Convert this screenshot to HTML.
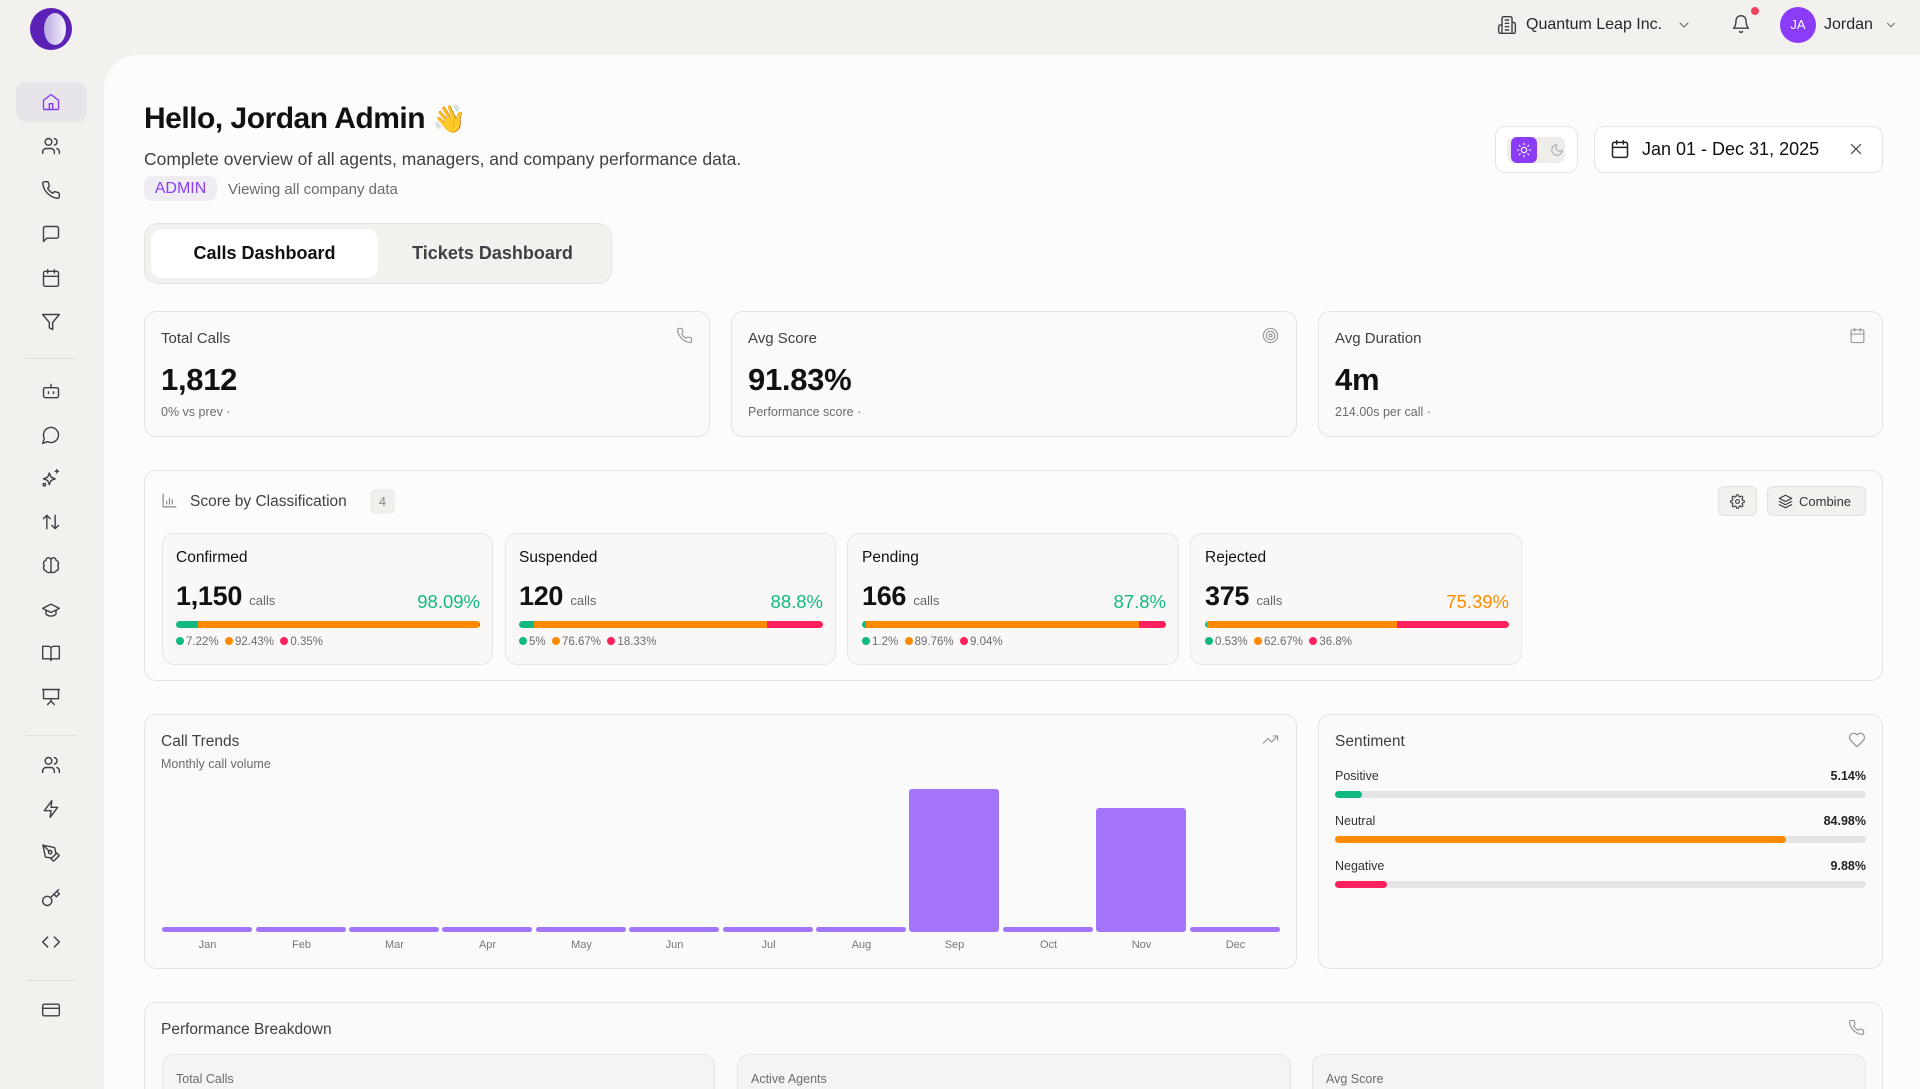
<!DOCTYPE html>
<html><head><meta charset="utf-8"><style>
*{box-sizing:border-box;margin:0;padding:0}
html,body{width:1920px;height:1089px;overflow:hidden}
body{background:#f3f1ed;font-family:"Liberation Sans",sans-serif;color:#111}
#w{position:relative;width:1920px;height:1089px;overflow:hidden}
.a{position:absolute}
svg.i{fill:none;stroke:#3f3f46;stroke-width:1.7;stroke-linecap:round;stroke-linejoin:round}
.main{position:absolute;left:104px;top:55px;width:1816px;height:1034px;background:#fcfcfb;border-top-left-radius:34px}
.card{position:absolute;background:#fafafa;border:1.5px solid #e4e4e4;border-radius:12px}
.sub{position:absolute;background:#f9f8f7;border:1.5px solid #e8e6e4;border-radius:12px}
.muted{color:#6b6b6b}
.dot{display:inline-block;width:8px;height:8px;border-radius:50%;margin-right:2px;vertical-align:0}
.bar{position:absolute;height:7px;border-radius:4px;overflow:hidden;display:flex}
.mb{position:absolute;background:#a475fb;border-radius:3px}
.ml{position:absolute;font-size:11px;color:#777;text-align:center;width:91px}
.sep{position:absolute;left:26px;width:50px;border-top:1px solid #e2dfda}
</style></head><body><div id="w">
<div class="a" style="left:30px;top:8px;width:42px;height:42px;border-radius:50%;background:#5b21b6"></div>
<div class="a" style="left:44px;top:13px;width:22px;height:32px;border-radius:50%;background:linear-gradient(90deg,#b9a8e0,#f4f1fb)"></div>
<div class="a" style="left:16px;top:82px;width:71px;height:40px;border-radius:10px;background:#e7e5ea"></div>
<svg class="i a" style="left:41px;top:92px;stroke:#8b3cf6" width="20" height="20" viewBox="0 0 24 24"><path d="M3 10l9-7 9 7v10a1 1 0 0 1-1 1H4a1 1 0 0 1-1-1z"/><path d="M10 21v-7h4v7"/></svg>
<svg class="i a" style="left:41px;top:136px" width="20" height="20" viewBox="0 0 24 24"><circle cx="9" cy="7" r="4"/><path d="M2 21v-2a4 4 0 0 1 4-4h6a4 4 0 0 1 4 4v2M16 3.1a4 4 0 0 1 0 7.8M22 21v-2a4 4 0 0 0-3-3.9"/></svg>
<svg class="i a" style="left:41px;top:180px" width="20" height="20" viewBox="0 0 24 24"><path d="M22 16.9v3a2 2 0 0 1-2.2 2 19.8 19.8 0 0 1-8.6-3.1 19.5 19.5 0 0 1-6-6A19.8 19.8 0 0 1 2.1 4.2 2 2 0 0 1 4.1 2h3a2 2 0 0 1 2 1.7c.1 1 .4 1.9.7 2.8a2 2 0 0 1-.5 2.1L8 9.9a16 16 0 0 0 6 6l1.3-1.3a2 2 0 0 1 2.1-.4c.9.3 1.8.6 2.8.7a2 2 0 0 1 1.7 2z"/></svg>
<svg class="i a" style="left:41px;top:224px" width="20" height="20" viewBox="0 0 24 24"><path d="M21 15a2 2 0 0 1-2 2H7l-4 4V5a2 2 0 0 1 2-2h14a2 2 0 0 1 2 2z"/></svg>
<svg class="i a" style="left:41px;top:268px" width="20" height="20" viewBox="0 0 24 24"><rect x="3" y="4" width="18" height="18" rx="2"/><path d="M16 2v4M8 2v4M3 10h18"/></svg>
<svg class="i a" style="left:41px;top:312px" width="20" height="20" viewBox="0 0 24 24"><path d="M22 3H2l8 9.5V19l4 2v-8.5z"/></svg>
<div class="sep" style="top:358px"></div>
<svg class="i a" style="left:41px;top:381px" width="20" height="20" viewBox="0 0 24 24"><rect x="3" y="8" width="18" height="12" rx="2"/><path d="M12 8V4M9 13v2M15 13v2"/></svg>
<svg class="i a" style="left:41px;top:425px" width="20" height="20" viewBox="0 0 24 24"><path d="M7.9 20A9 9 0 1 0 4 16.1L2 22z"/></svg>
<svg class="i a" style="left:41px;top:468px" width="20" height="20" viewBox="0 0 24 24"><path d="M10 6l2 5 5 2-5 2-2 5-2-5-5-2 5-2zM19 2v4M17 4h4"/><circle cx="4" cy="20" r="1.5"/></svg>
<svg class="i a" style="left:41px;top:512px" width="20" height="20" viewBox="0 0 24 24"><path d="M7 20V4M3 8l4-4 4 4M17 4v16M13 16l4 4 4-4"/></svg>
<svg class="i a" style="left:41px;top:556px" width="20" height="20" viewBox="0 0 24 24"><path d="M12 5a3 3 0 1 0-6 .1 4 4 0 0 0-2 6.4A4 4 0 0 0 6 18a4 4 0 0 0 6 1zM12 5a3 3 0 1 1 6 .1 4 4 0 0 1 2 6.4A4 4 0 0 1 18 18a4 4 0 0 1-6 1zM12 5v14"/></svg>
<svg class="i a" style="left:41px;top:600px" width="20" height="20" viewBox="0 0 24 24"><path d="M22 10L12 5 2 10l10 5zM6 12v5c3 3 9 3 12 0v-5"/></svg>
<svg class="i a" style="left:41px;top:643px" width="20" height="20" viewBox="0 0 24 24"><path d="M2 4h7a3 3 0 0 1 3 3v14a2 2 0 0 0-2-2H2zM22 4h-7a3 3 0 0 0-3 3v14a2 2 0 0 1 2-2h8z"/></svg>
<svg class="i a" style="left:41px;top:687px" width="20" height="20" viewBox="0 0 24 24"><path d="M2 3h20M3 3v11h18V3M12 14v3M8 21l4-4 4 4"/></svg>
<div class="sep" style="top:735px"></div>
<svg class="i a" style="left:41px;top:755px" width="20" height="20" viewBox="0 0 24 24"><circle cx="9" cy="7" r="4"/><path d="M2 21v-2a4 4 0 0 1 4-4h6a4 4 0 0 1 4 4v2M16 3.1a4 4 0 0 1 0 7.8M22 21v-2a4 4 0 0 0-3-3.9"/></svg>
<svg class="i a" style="left:41px;top:799px" width="20" height="20" viewBox="0 0 24 24"><path d="M13 2L4 14h8l-1 8 9-12h-8z"/></svg>
<svg class="i a" style="left:41px;top:843px" width="20" height="20" viewBox="0 0 24 24"><path d="M15.7 21.3a1 1 0 0 1-1.4 0l-1.6-1.6a1 1 0 0 1 0-1.4l5.6-5.6a1 1 0 0 1 1.4 0l1.6 1.6a1 1 0 0 1 0 1.4zM18 13l-1.4-6.9a1 1 0 0 0-.8-.8L2.3 2.6 5.1 16.2a1 1 0 0 0 .8.8L13 18M2.3 2.3l7.3 7.3"/><circle cx="11" cy="11" r="2"/></svg>
<svg class="i a" style="left:41px;top:888px" width="20" height="20" viewBox="0 0 24 24"><circle cx="7.5" cy="15.5" r="5.5"/><path d="M21 2l-9.6 9.6M15.5 7.5l3 3L22 7l-3-3"/></svg>
<svg class="i a" style="left:41px;top:932px" width="20" height="20" viewBox="0 0 24 24"><path d="M16 18l6-6-6-6M8 6l-6 6 6 6"/></svg>
<div class="sep" style="top:980px"></div>
<svg class="i a" style="left:41px;top:1000px" width="20" height="20" viewBox="0 0 24 24"><rect x="2" y="5" width="20" height="14" rx="2"/><path d="M2 10h20"/></svg>

<svg class="i a" style="left:1497px;top:15px" width="20" height="20" viewBox="0 0 24 24"><path d="M6 22V4a2 2 0 0 1 2-2h8a2 2 0 0 1 2 2v18zM6 12H4a2 2 0 0 0-2 2v6a2 2 0 0 0 2 2h2M18 9h2a2 2 0 0 1 2 2v9a2 2 0 0 1-2 2h-2M10 6h4M10 10h4M10 14h4M10 18h4"/></svg>
<div class="a" style="left:1526px;top:16px;font-size:16px;color:#27272a">Quantum Leap Inc.</div>
<svg class="i a" style="left:1676px;top:17px;stroke:#666" width="16" height="16" viewBox="0 0 24 24"><path d="M6 9l6 6 6-6"/></svg>
<svg class="i a" style="left:1731px;top:14px" width="20" height="20" viewBox="0 0 24 24"><path d="M6 8a6 6 0 0 1 12 0c0 7 3 9 3 9H3s3-2 3-9M10.3 21a1.9 1.9 0 0 0 3.4 0"/></svg>
<div class="a" style="left:1751px;top:7px;width:8px;height:8px;border-radius:50%;background:#f43f5e"></div>
<div class="a" style="left:1780px;top:7px;width:36px;height:36px;border-radius:50%;background:#8b3cf6;color:#fff;font-size:13px;line-height:36px;text-align:center">JA</div>
<div class="a" style="left:1824px;top:16px;font-size:16px;color:#27272a">Jordan</div>
<svg class="i a" style="left:1884px;top:18px;stroke:#666" width="14" height="14" viewBox="0 0 24 24"><path d="M6 9l6 6 6-6"/></svg>

<div class="main"></div>
<div class="a" style="left:144px;top:102px;font-size:30px;font-weight:bold;letter-spacing:-.5px">Hello, Jordan Admin <span style="font-size:27px">👋</span></div>
<div class="a" style="left:144px;top:149px;font-size:17.5px;color:#3f3f46">Complete overview of all agents, managers, and company performance data.</div>
<div class="a" style="left:144px;top:176px;width:73px;height:25px;border-radius:8px;background:#efedf3;color:#8b3cf6;font-size:16px;line-height:25px;text-align:center">ADMIN</div>
<div class="a" style="left:228px;top:181px;font-size:15px;color:#6b6b6b">Viewing all company data</div>
<div class="a" style="left:144px;top:223px;width:468px;height:61px;border-radius:14px;background:#f3f1ee;border:1.5px solid #e5e3df"></div>
<div class="a" style="left:151px;top:229px;width:227px;height:49px;border-radius:11px;background:#fff;font-size:18px;line-height:49px;text-align:center;font-weight:bold;color:#111">Calls Dashboard</div>
<div class="a" style="left:390px;top:229px;width:205px;height:49px;font-size:18px;line-height:49px;text-align:center;font-weight:bold;color:#3f3f46">Tickets Dashboard</div>

<div class="a" style="left:1495px;top:126px;width:83px;height:47px;border-radius:10px;background:#fff;border:1.5px solid #e3e3e3"></div>
<div class="a" style="left:1507px;top:137px;width:58px;height:26px;border-radius:7px;background:#efedea"></div>
<div class="a" style="left:1511px;top:137px;width:26px;height:26px;border-radius:6px;background:#8b3cf6"></div>
<svg class="i a" style="left:1516px;top:142px;stroke:#fff;stroke-width:1.6" width="16" height="16" viewBox="0 0 24 24"><circle cx="12" cy="12" r="4"/><path d="M12 2v2M12 20v2M4.9 4.9l1.4 1.4M17.7 17.7l1.4 1.4M2 12h2M20 12h2M6.3 17.7l-1.4 1.4M19.1 4.9l-1.4 1.4"/></svg>
<svg class="i a" style="left:1550px;top:143px;stroke:#aaa" width="14" height="14" viewBox="0 0 24 24"><path d="M12 3a6 6 0 0 0 9 9 9 9 0 1 1-9-9z"/></svg>
<div class="a" style="left:1594px;top:126px;width:289px;height:47px;border-radius:10px;background:#fff;border:1.5px solid #e3e3e3"></div>
<svg class="i a" style="left:1610px;top:139px;stroke:#222;stroke-width:1.8" width="20" height="20" viewBox="0 0 24 24"><rect x="3" y="4" width="18" height="18" rx="2"/><path d="M16 2v4M8 2v4M3 10h18"/></svg>
<div class="a" style="left:1642px;top:139px;font-size:18px;color:#111">Jan 01 - Dec 31, 2025</div>
<svg class="i a" style="left:1847px;top:140px;stroke:#555" width="18" height="18" viewBox="0 0 24 24"><path d="M18 6L6 18M6 6l12 12"/></svg>

<div class="card" style="left:144px;top:311px;width:566px;height:126px"></div>
<div class="card" style="left:731px;top:311px;width:566px;height:126px"></div>
<div class="card" style="left:1318px;top:311px;width:565px;height:126px"></div>
<div class="a" style="left:161px;top:330px;font-size:15px;color:#3f3f46">Total Calls</div>
<div class="a" style="left:161px;top:362px;font-size:31px;font-weight:bold;letter-spacing:-.3px">1,812</div>
<div class="a muted" style="left:161px;top:405px;font-size:12.5px">0% vs prev ·</div>
<svg class="i a" style="left:676px;top:327px;stroke:#999" width="17" height="17" viewBox="0 0 24 24"><path d="M22 16.9v3a2 2 0 0 1-2.2 2 19.8 19.8 0 0 1-8.6-3.1 19.5 19.5 0 0 1-6-6A19.8 19.8 0 0 1 2.1 4.2 2 2 0 0 1 4.1 2h3a2 2 0 0 1 2 1.7c.1 1 .4 1.9.7 2.8a2 2 0 0 1-.5 2.1L8 9.9a16 16 0 0 0 6 6l1.3-1.3a2 2 0 0 1 2.1-.4c.9.3 1.8.6 2.8.7a2 2 0 0 1 1.7 2z"/></svg>
<div class="a" style="left:748px;top:330px;font-size:15px;color:#3f3f46">Avg Score</div>
<div class="a" style="left:748px;top:362px;font-size:31px;font-weight:bold;letter-spacing:-.3px">91.83%</div>
<div class="a muted" style="left:748px;top:405px;font-size:12.5px">Performance score ·</div>
<svg class="i a" style="left:1262px;top:327px;stroke:#999" width="17" height="17" viewBox="0 0 24 24"><circle cx="12" cy="12" r="10"/><circle cx="12" cy="12" r="6"/><circle cx="12" cy="12" r="2"/></svg>
<div class="a" style="left:1335px;top:330px;font-size:15px;color:#3f3f46">Avg Duration</div>
<div class="a" style="left:1335px;top:362px;font-size:31px;font-weight:bold;letter-spacing:-.3px">4m</div>
<div class="a muted" style="left:1335px;top:405px;font-size:12.5px">214.00s per call ·</div>
<svg class="i a" style="left:1849px;top:327px;stroke:#999" width="17" height="17" viewBox="0 0 24 24"><rect x="3" y="4" width="18" height="18" rx="2"/><path d="M16 2v4M8 2v4M3 10h18"/></svg>

<div class="card" style="left:144px;top:470px;width:1739px;height:211px;background:#fcfcfb"></div>
<svg class="i a" style="left:161px;top:492px;stroke:#888" width="17" height="17" viewBox="0 0 24 24"><path d="M3 3v18h18M8 17v-4M12 17V9M16 17v-6"/></svg>
<div class="a" style="left:190px;top:493px;font-size:15.5px;color:#3f3f46">Score by Classification</div>
<div class="a" style="left:370px;top:489px;width:25px;height:25px;border-radius:5px;background:#f1efec;color:#888;font-size:13px;line-height:25px;text-align:center">4</div>
<div class="a" style="left:1718px;top:486px;width:39px;height:30px;border-radius:6px;background:#f3f1ee;border:1.5px solid #e3e1dd"></div>
<svg class="i a" style="left:1730px;top:494px;stroke:#333" width="15" height="15" viewBox="0 0 24 24"><circle cx="12" cy="12" r="3"/><path d="M19.4 15a1.7 1.7 0 0 0 .3 1.8l.1.1a2 2 0 1 1-2.8 2.8l-.1-.1a1.7 1.7 0 0 0-1.8-.3 1.7 1.7 0 0 0-1 1.5V21a2 2 0 1 1-4 0v-.1a1.7 1.7 0 0 0-1.1-1.5 1.7 1.7 0 0 0-1.8.3l-.1.1a2 2 0 1 1-2.8-2.8l.1-.1a1.7 1.7 0 0 0 .3-1.8 1.7 1.7 0 0 0-1.5-1H3a2 2 0 1 1 0-4h.1a1.7 1.7 0 0 0 1.5-1.1 1.7 1.7 0 0 0-.3-1.8l-.1-.1a2 2 0 1 1 2.8-2.8l.1.1a1.7 1.7 0 0 0 1.8.3H9a1.7 1.7 0 0 0 1-1.5V3a2 2 0 1 1 4 0v.1a1.7 1.7 0 0 0 1 1.5 1.7 1.7 0 0 0 1.8-.3l.1-.1a2 2 0 1 1 2.8 2.8l-.1.1a1.7 1.7 0 0 0-.3 1.8V9a1.7 1.7 0 0 0 1.5 1H21a2 2 0 1 1 0 4h-.1a1.7 1.7 0 0 0-1.5 1z"/></svg>
<div class="a" style="left:1767px;top:486px;width:99px;height:30px;border-radius:6px;background:#f3f1ee;border:1.5px solid #e3e1dd"></div>
<svg class="i a" style="left:1778px;top:494px;stroke:#333" width="15" height="15" viewBox="0 0 24 24"><path d="M12 2L2 7l10 5 10-5zM2 12l10 5 10-5M2 17l10 5 10-5"/></svg>
<div class="a" style="left:1799px;top:494px;font-size:13px;color:#333">Combine</div>

<div class="sub" style="left:162px;top:533px;width:331px;height:132px"></div>
<div class="sub" style="left:505px;top:533px;width:331px;height:132px"></div>
<div class="sub" style="left:847px;top:533px;width:332px;height:132px"></div>
<div class="sub" style="left:1190px;top:533px;width:332px;height:132px"></div>

<div class="a" style="left:176px;top:549px;font-size:15.5px">Confirmed</div>
<div class="a" style="left:176px;top:581px;font-size:27px;font-weight:bold;letter-spacing:-.3px">1,150 <span style="font-size:13px;font-weight:normal;color:#666;letter-spacing:0">calls</span></div>
<div class="a" style="left:380px;top:591px;width:100px;text-align:right;font-size:18.5px;color:#10b981">98.09%</div>
<div class="bar" style="left:176px;top:621px;width:304px"><div style="width:7.22%;background:#10b981"></div><div style="width:92.43%;background:#ff8a00"></div><div style="flex:1;background:#ff2060"></div></div>
<div class="a muted" style="left:176px;top:636px;font-size:11.5px"><span class="dot" style="background:#10b981"></span>7.22% &nbsp;<span class="dot" style="background:#ff8a00"></span>92.43% &nbsp;<span class="dot" style="background:#ff2060"></span>0.35%</div>

<div class="a" style="left:519px;top:549px;font-size:15.5px">Suspended</div>
<div class="a" style="left:519px;top:581px;font-size:27px;font-weight:bold;letter-spacing:-.3px">120 <span style="font-size:13px;font-weight:normal;color:#666;letter-spacing:0">calls</span></div>
<div class="a" style="left:723px;top:591px;width:100px;text-align:right;font-size:18.5px;color:#10b981">88.8%</div>
<div class="bar" style="left:519px;top:621px;width:304px"><div style="width:5%;background:#10b981"></div><div style="width:76.67%;background:#ff8a00"></div><div style="flex:1;background:#ff2060"></div></div>
<div class="a muted" style="left:519px;top:636px;font-size:11.5px"><span class="dot" style="background:#10b981"></span>5% &nbsp;<span class="dot" style="background:#ff8a00"></span>76.67% &nbsp;<span class="dot" style="background:#ff2060"></span>18.33%</div>

<div class="a" style="left:862px;top:549px;font-size:15.5px">Pending</div>
<div class="a" style="left:862px;top:581px;font-size:27px;font-weight:bold;letter-spacing:-.3px">166 <span style="font-size:13px;font-weight:normal;color:#666;letter-spacing:0">calls</span></div>
<div class="a" style="left:1066px;top:591px;width:100px;text-align:right;font-size:18.5px;color:#10b981">87.8%</div>
<div class="bar" style="left:862px;top:621px;width:304px"><div style="width:1.2%;background:#10b981"></div><div style="width:89.76%;background:#ff8a00"></div><div style="flex:1;background:#ff2060"></div></div>
<div class="a muted" style="left:862px;top:636px;font-size:11.5px"><span class="dot" style="background:#10b981"></span>1.2% &nbsp;<span class="dot" style="background:#ff8a00"></span>89.76% &nbsp;<span class="dot" style="background:#ff2060"></span>9.04%</div>

<div class="a" style="left:1205px;top:549px;font-size:15.5px">Rejected</div>
<div class="a" style="left:1205px;top:581px;font-size:27px;font-weight:bold;letter-spacing:-.3px">375 <span style="font-size:13px;font-weight:normal;color:#666;letter-spacing:0">calls</span></div>
<div class="a" style="left:1409px;top:591px;width:100px;text-align:right;font-size:18.5px;color:#ff8a00">75.39%</div>
<div class="bar" style="left:1205px;top:621px;width:304px"><div style="width:0.53%;background:#10b981"></div><div style="width:62.67%;background:#ff8a00"></div><div style="flex:1;background:#ff2060"></div></div>
<div class="a muted" style="left:1205px;top:636px;font-size:11.5px"><span class="dot" style="background:#10b981"></span>0.53% &nbsp;<span class="dot" style="background:#ff8a00"></span>62.67% &nbsp;<span class="dot" style="background:#ff2060"></span>36.8%</div>

<div class="card" style="left:144px;top:714px;width:1153px;height:255px"></div>
<div class="a" style="left:161px;top:733px;font-size:15.5px;color:#3f3f46">Call Trends</div>
<div class="a muted" style="left:161px;top:757px;font-size:12.5px">Monthly call volume</div>
<svg class="i a" style="left:1262px;top:731px;stroke:#999" width="17" height="17" viewBox="0 0 24 24"><path d="M22 7l-8.5 8.5-5-5L2 17M16 7h6v6"/></svg>
<div class="mb" style="left:162px;top:927px;width:90px;height:5px"></div>
<div class="mb" style="left:256px;top:927px;width:90px;height:5px"></div>
<div class="mb" style="left:349px;top:927px;width:90px;height:5px"></div>
<div class="mb" style="left:442px;top:927px;width:90px;height:5px"></div>
<div class="mb" style="left:536px;top:927px;width:90px;height:5px"></div>
<div class="mb" style="left:629px;top:927px;width:90px;height:5px"></div>
<div class="mb" style="left:723px;top:927px;width:90px;height:5px"></div>
<div class="mb" style="left:816px;top:927px;width:90px;height:5px"></div>
<div class="mb" style="left:909px;top:789px;width:90px;height:143px"></div>
<div class="mb" style="left:1003px;top:927px;width:90px;height:5px"></div>
<div class="mb" style="left:1096px;top:808px;width:90px;height:124px"></div>
<div class="mb" style="left:1190px;top:927px;width:90px;height:5px"></div>
<div class="ml" style="left:162px;top:939px">Jan</div><div class="ml" style="left:256px;top:939px">Feb</div><div class="ml" style="left:349px;top:939px">Mar</div><div class="ml" style="left:442px;top:939px">Apr</div><div class="ml" style="left:536px;top:939px">May</div><div class="ml" style="left:629px;top:939px">Jun</div><div class="ml" style="left:723px;top:939px">Jul</div><div class="ml" style="left:816px;top:939px">Aug</div><div class="ml" style="left:909px;top:939px">Sep</div><div class="ml" style="left:1003px;top:939px">Oct</div><div class="ml" style="left:1096px;top:939px">Nov</div><div class="ml" style="left:1190px;top:939px">Dec</div>

<div class="card" style="left:1318px;top:714px;width:565px;height:255px"></div>
<div class="a" style="left:1335px;top:733px;font-size:15.5px;color:#3f3f46">Sentiment</div>
<svg class="i a" style="left:1848px;top:731px;stroke:#999" width="18" height="18" viewBox="0 0 24 24"><path d="M19 14c1.5-1.5 3-3.2 3-5.5A5.5 5.5 0 0 0 16.5 3c-1.8 0-3 .5-4.5 2-1.5-1.5-2.7-2-4.5-2A5.5 5.5 0 0 0 2 8.5c0 2.3 1.5 4 3 5.5l7 7z"/></svg>
<div class="a" style="left:1335px;top:769px;font-size:12.5px;color:#333">Positive</div><div class="a" style="left:1766px;top:769px;width:100px;text-align:right;font-size:12.5px;font-weight:bold;color:#222">5.14%</div>
<div class="a" style="left:1335px;top:791px;width:531px;height:7px;border-radius:4px;background:#e4e4e7"><div style="width:5.14%;height:7px;border-radius:4px;background:#10b981"></div></div>
<div class="a" style="left:1335px;top:814px;font-size:12.5px;color:#333">Neutral</div><div class="a" style="left:1766px;top:814px;width:100px;text-align:right;font-size:12.5px;font-weight:bold;color:#222">84.98%</div>
<div class="a" style="left:1335px;top:836px;width:531px;height:7px;border-radius:4px;background:#e4e4e7"><div style="width:84.98%;height:7px;border-radius:4px;background:#ff8a00"></div></div>
<div class="a" style="left:1335px;top:859px;font-size:12.5px;color:#333">Negative</div><div class="a" style="left:1766px;top:859px;width:100px;text-align:right;font-size:12.5px;font-weight:bold;color:#222">9.88%</div>
<div class="a" style="left:1335px;top:881px;width:531px;height:7px;border-radius:4px;background:#e4e4e7"><div style="width:9.88%;height:7px;border-radius:4px;background:#ff2060"></div></div>

<div class="card" style="left:144px;top:1002px;width:1739px;height:120px"></div>
<div class="a" style="left:161px;top:1021px;font-size:15.5px;color:#3f3f46">Performance Breakdown</div>
<svg class="i a" style="left:1848px;top:1019px;stroke:#999" width="17" height="17" viewBox="0 0 24 24"><path d="M22 16.9v3a2 2 0 0 1-2.2 2 19.8 19.8 0 0 1-8.6-3.1 19.5 19.5 0 0 1-6-6A19.8 19.8 0 0 1 2.1 4.2 2 2 0 0 1 4.1 2h3a2 2 0 0 1 2 1.7c.1 1 .4 1.9.7 2.8a2 2 0 0 1-.5 2.1L8 9.9a16 16 0 0 0 6 6l1.3-1.3a2 2 0 0 1 2.1-.4c.9.3 1.8.6 2.8.7a2 2 0 0 1 1.7 2z"/></svg>
<div class="sub" style="left:162px;top:1054px;width:553px;height:60px;background:#f4f4f3"></div>
<div class="sub" style="left:737px;top:1054px;width:554px;height:60px;background:#f4f4f3"></div>
<div class="sub" style="left:1312px;top:1054px;width:554px;height:60px;background:#f4f4f3"></div>
<div class="a muted" style="left:176px;top:1072px;font-size:12.5px">Total Calls</div>
<div class="a muted" style="left:751px;top:1072px;font-size:12.5px">Active Agents</div>
<div class="a muted" style="left:1326px;top:1072px;font-size:12.5px">Avg Score</div>
</div></body></html>
